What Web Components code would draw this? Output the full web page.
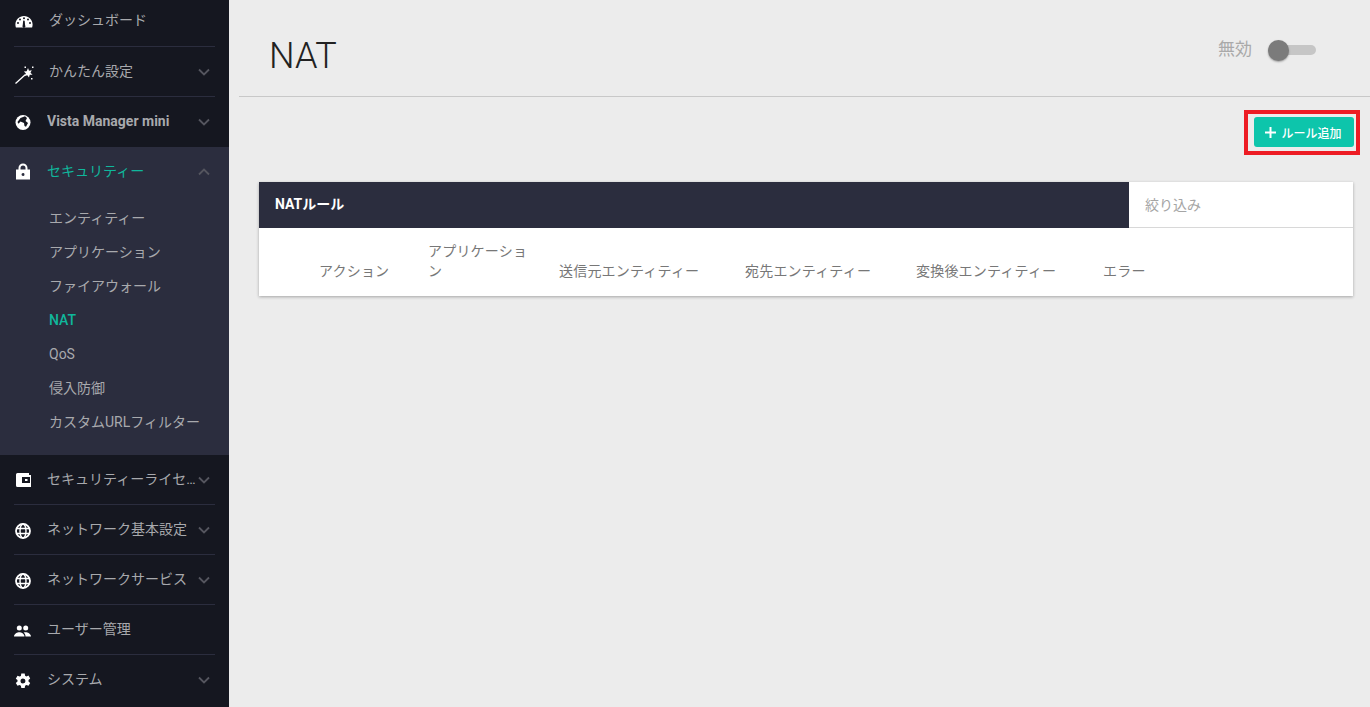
<!DOCTYPE html>
<html lang="ja">
<head>
<meta charset="utf-8">
<title>NAT</title>
<style>
  html, body { margin: 0; height: 100%; background: #ececec; overflow: hidden; }
  body { font-family: Roboto, "Noto Sans CJK JP", sans-serif; display: flex; }
</style>
</head>
<body>
<app-sidebar>
  <nav-row label="ダッシュボード" icon="gauge" nochevron indent="49"></nav-row>
  <nav-row label="かんたん設定" icon="wand" indent="49"></nav-row>
  <nav-row label="Vista Manager mini" icon="earth" bold noborder></nav-row>
  <nav-group label="セキュリティー" icon="lock">
    <sub-item>エンティティー</sub-item>
    <sub-item>アプリケーション</sub-item>
    <sub-item>ファイアウォール</sub-item>
    <sub-item active>NAT</sub-item>
    <sub-item>QoS</sub-item>
    <sub-item>侵入防御</sub-item>
    <sub-item>カスタムURLフィルター</sub-item>
  </nav-group>
  <nav-row label="セキュリティーライセンス" icon="wallet"></nav-row>
  <nav-row label="ネットワーク基本設定" icon="globe"></nav-row>
  <nav-row label="ネットワークサービス" icon="globe"></nav-row>
  <nav-row label="ユーザー管理" icon="people" nochevron></nav-row>
  <nav-row label="システム" icon="gear" noborder></nav-row>
</app-sidebar>
<nat-page></nat-page>

<script>
const GLOBE = '<g transform="translate(-1 1)"><circle cx="9" cy="9" r="7" fill="none" stroke="#fff" stroke-width="1.800"/><ellipse cx="9" cy="9" rx="3" ry="7" fill="none" stroke="#fff" stroke-width="1.400"/><path stroke="#fff" stroke-width="1.400" d="M2 6.500h14M2 11.500h14"/></g>';

const ICONS = {
  gauge: '<path fill="#fff" fill-rule="evenodd" d="M9 3C4.200 3 .4 6.800.4 11.500c0 1.100.2 2.100.5 3h16.200c.3-.9.500-1.900.5-3C17.600 6.800 13.800 3 9 3zM9 4.300a1 1 0 1 1 0 2 1 1 0 0 1 0-2zM5 5.500a1 1 0 1 1 0 2 1 1 0 0 1 0-2zm8 0a1 1 0 1 1 0 2 1 1 0 0 1 0-2zM3 9a1 1 0 1 1 0 2 1 1 0 0 1 0-2zm12 0a1 1 0 1 1 0 2 1 1 0 0 1 0-2zM8.200 7.500l1.500.2.4 4.500a1.500 1.500 0 1 1-2.400.1z"/>',
  wand: '<path stroke="#fff" stroke-width="1.300" d="M.5 20.500 10.500 11.500"/><path fill="#fff" d="M13 5l1 2.800 2.700-.6-1.200 2.500 2 2-2.800.1-.7 2.700-1.700-2.200-2.700.8 1.300-2.500-2-2 2.800-.3zM9.500 3.500h1.500V5H9.500zM17 3.500h1.500V5H17zM16 15h1.500v1.500H16z"/>',
  earth: '<circle cx="8" cy="9.500" r="7.500" fill="#fff"/><path fill="#151720" d="M2.500 9 5.500 5 10 3.300l2 1.700-1.500 3 2.500 2-2 3.700-1.500-.7-.5-3-3.500-1.500-2 2.200z"/>',
  lock: '<path fill="#fff" fill-rule="evenodd" d="M3.500 6.500V5a4.500 4.500 0 0 1 9 0v1.500H15v10H1v-10zM5.500 6.500h5V5a2.500 2.500 0 0 0-5 0zM8 10a1.500 1.500 0 1 0 .01 3A1.500 1.500 0 0 0 8 10z"/>',
  wallet: '<path fill="#fff" fill-rule="evenodd" d="M2.500 2H14v2h2v12H2.500A1.500 1.500 0 0 1 1 14.500v-11A1.500 1.500 0 0 1 2.500 2zM7 6v6h8V6zM10 8h2.500v2H10z"/>',
  globe: GLOBE,
  people: '<path fill="#fff" transform="translate(-1.500 1)" d="M5.800 8.500a2.500 2.500 0 1 0 0-5 2.500 2.500 0 0 0 0 5zm6.400 0a2.500 2.500 0 1 0 0-5 2.500 2.500 0 0 0 0 5zM.5 14.500c0-2.700 3.500-4.200 5.300-4.200s5.200 1.500 5.200 4.200zm11.500 0c0-1.700-.7-3-1.900-3.900.8-.2 1.500-.3 2.100-.3 1.800 0 5.300 1.500 5.300 4.200z"/>',
  gear: '<path fill="#fff" fill-rule="evenodd" transform="translate(-1 1)" d="M7.300 1.500h3.400l.4 2.200 1.300.7 2.100-.8 1.700 2.900-1.700 1.400v1.600l1.700 1.400-1.700 2.900-2.100-.8-1.300.7-.4 2.200H7.300l-.4-2.200-1.300-.7-2.100.8-1.700-2.900 1.700-1.400V8.100L1.800 6.700l1.700-2.900 2.100.8 1.300-.7zM9 6.500a2.500 2.500 0 1 0 0 5 2.500 2.500 0 0 0 0-5z"/>'
};

const CHEVRON = (up) => `<svg class="chev" width="12" height="8" viewBox="0 0 12 8">
  <path d="${up ? 'M1 6.500 6 1.500l5 5' : 'M1 1.500l5 5 5-5'}" fill="none" stroke="#55565f" stroke-width="1.800"/></svg>`;

class AppSidebar extends HTMLElement {
  constructor() {
    super();
    this.attachShadow({ mode: 'open' });
    this.shadowRoot.innerHTML = `
      <style>
        :host {
          display: block;
          width: 229px;
          height: 707px;
          flex: none;
          background: #151720;
          overflow: hidden;
        }
        .top { margin-top: -3px; }
      </style>
      <div class="top"><slot></slot></div>
    `;
  }
}

class NavRow extends HTMLElement {
  connectedCallback() {
    if (this.shadowRoot) return;
    this.attachShadow({ mode: 'open' });
    const indent = this.getAttribute('indent') || '47';
    const chevron = this.hasAttribute('nochevron') ? '' : CHEVRON(false);
    this.shadowRoot.innerHTML = `
      <style>
        :host { display: block; padding: 0 14px; }
        .row {
          height: 49px;
          display: flex;
          align-items: center;
          border-bottom: 1px solid #2b2d3e;
          position: relative;
          font-size: 14px;
          color: #a8a9ad;
        }
        :host([noborder]) .row { border-bottom-color: transparent; }
        :host([bold]) .row { font-weight: 700; }
        :host([bold]) .label { padding-bottom: 2px; }
        :host(:first-child) .label { padding-bottom: 6px; }
        svg.ico { flex: none; margin-left: 1px; overflow: visible; }
        .label {
          position: absolute;
          left: ${indent - 14}px;
          right: 17px;
          padding-bottom: 4px;
          white-space: nowrap;
          overflow: hidden;
          text-overflow: ellipsis;
        }
        .chev { position: absolute; right: 5px; top: 21px; }
      </style>
      <div class="row">
        <svg class="ico" width="18" height="18" viewBox="0 0 18 18">${ICONS[this.getAttribute('icon')]}</svg>
        <span class="label">${this.getAttribute('label')}</span>
        ${chevron}
      </div>
    `;
  }
}

class NavGroup extends HTMLElement {
  connectedCallback() {
    if (this.shadowRoot) return;
    this.attachShadow({ mode: 'open' });
    this.shadowRoot.innerHTML = `
      <style>
        :host { display: block; background: #2b2d3e; height: 308px; }
        .head {
          height: 49px;
          padding: 0 14px;
          display: flex;
          align-items: center;
          position: relative;
          font-size: 14px;
          color: #10b79c;
        }
        svg.ico { margin-left: 1px; overflow: visible; }
        .label { position: absolute; left: 47px; padding-bottom: 4px; }
        .chev { position: absolute; right: 19px; top: 21px; }
        .items { padding: 5px 0 0 49px; }
      </style>
      <div class="head">
        <svg class="ico" width="18" height="18" viewBox="0 0 18 18">${ICONS[this.getAttribute('icon')]}</svg>
        <span class="label">${this.getAttribute('label')}</span>
        ${CHEVRON(true)}
      </div>
      <div class="items"><slot></slot></div>
    `;
  }
}

class SubItem extends HTMLElement {
  constructor() {
    super();
    this.attachShadow({ mode: 'open' });
    this.shadowRoot.innerHTML = `
      <style>
        :host {
          display: block;
          height: 34px;
          line-height: 34px;
          font-size: 14px;
          color: #a8a9ad;
          white-space: nowrap;
        }
        :host([active]) { color: #10b79c; font-weight: 500; }
      </style>
      <slot></slot>
    `;
  }
}

class ToggleSwitch extends HTMLElement {
  constructor() {
    super();
    this.attachShadow({ mode: 'open' });
    this.shadowRoot.innerHTML = `
      <style>
        :host { display: flex; align-items: center; gap: 16px; color: #a9a9a9; font-size: 17px; }
        span { padding-bottom: 6px; }
        .track {
          width: 48px;
          height: 10px;
          border-radius: 5px;
          background: #c6c6c6;
          position: relative;
        }
        .knob {
          position: absolute;
          left: 0;
          top: -5.500px;
          width: 21px;
          height: 21px;
          border-radius: 50%;
          background: #7b7b7b;
          box-shadow: 0 1px 2px rgba(0,0,0,.35);
        }
      </style>
      <span>無効</span>
      <div class="track"><div class="knob"></div></div>
    `;
  }
}

class AddButton extends HTMLElement {
  constructor() {
    super();
    this.attachShadow({ mode: 'open' });
    this.shadowRoot.innerHTML = `
      <style>
        :host {
          display: block;
          border: 4px solid #ed1c24;
          padding: 3px 2px 4px 6px;
        }
        button {
          width: 100px;
          height: 30px;
          border: 0;
          border-radius: 3px;
          background: #0dc5ab;
          color: #fff;
          font: 500 12px Roboto, "Noto Sans CJK JP", sans-serif;
          display: flex;
          align-items: center;
          justify-content: center;
          gap: 5px;
          padding: 0 1px 0 0;
        }
      </style>
      <button>
        <svg width="11" height="11" viewBox="0 0 11 11"><path d="M5.500 0v11M0 5.500h11" stroke="#fff" stroke-width="2"/></svg>
        <slot></slot>
      </button>
    `;
  }
}

class RulesCard extends HTMLElement {
  constructor() {
    super();
    this.attachShadow({ mode: 'open' });
    this.shadowRoot.innerHTML = `
      <style>
        :host {
          display: block;
          background: #fff;
          box-shadow: 0 1px 3px rgba(0,0,0,.3);
          height: 114px;
          font-size: 14px;
        }
        .head { display: flex; height: 46px; }
        .title {
          flex: 1;
          background: #2b2d3e;
          color: #fff;
          font-weight: 700;
          font-size: 14px;
          line-height: 44px;
          padding-left: 16px;
        }
        .filter {
          width: 224px;
          box-sizing: border-box;
          border-bottom: 1px solid #d8d8d8;
          color: #a5a5a5;
          line-height: 47px;
          padding-left: 16px;
        }
        .cols {
          display: grid;
          grid-template-columns: 60px 109px 131px 186px 171px 187px 1fr;
          height: 68px;
          align-items: end;
          color: #777;
          line-height: 20px;
          letter-spacing: .2px;
        }
        .cols span { padding-bottom: 15px; white-space: nowrap; }
        .cols .wrap { white-space: normal; width: 100px; padding-bottom: 15px; }
      </style>
      <div class="head">
        <div class="title">NATルール</div>
        <div class="filter">絞り込み</div>
      </div>
      <div class="cols">
        <span></span>
        <span>アクション</span>
        <span class="wrap">アプリケーション</span>
        <span>送信元エンティティー</span>
        <span>宛先エンティティー</span>
        <span>変換後エンティティー</span>
        <span>エラー</span>
      </div>
    `;
  }
}

class NatPage extends HTMLElement {
  constructor() {
    super();
    this.attachShadow({ mode: 'open' });
    this.shadowRoot.innerHTML = `
      <style>
        :host { display: block; flex: 1; min-width: 0; height: 707px; padding-left: 10px; }
        header {
          height: 96px;
          border-bottom: 1px solid #c8c8c8;
          display: flex;
          align-items: center;
          justify-content: space-between;
          padding: 0 54px 0 30px;
          box-sizing: content-box;
        }
        h1 {
          margin: 16px 0 0;
          font-size: 36px;
          font-weight: 300;
          color: #222;
        }
        toggle-switch { margin-top: 4px; }
        .actions { display: flex; justify-content: flex-end; padding: 13px 10px 0 0; }
        rules-card { margin: 27px 17px 0 20px; }
      </style>
      <header>
        <h1>NAT</h1>
        <toggle-switch></toggle-switch>
      </header>
      <div class="actions"><add-button>ルール追加</add-button></div>
      <rules-card></rules-card>
    `;
  }
}

customElements.define('app-sidebar', AppSidebar);
customElements.define('nav-row', NavRow);
customElements.define('nav-group', NavGroup);
customElements.define('sub-item', SubItem);
customElements.define('toggle-switch', ToggleSwitch);
customElements.define('add-button', AddButton);
customElements.define('rules-card', RulesCard);
customElements.define('nat-page', NatPage);
</script>
</body>
</html>
